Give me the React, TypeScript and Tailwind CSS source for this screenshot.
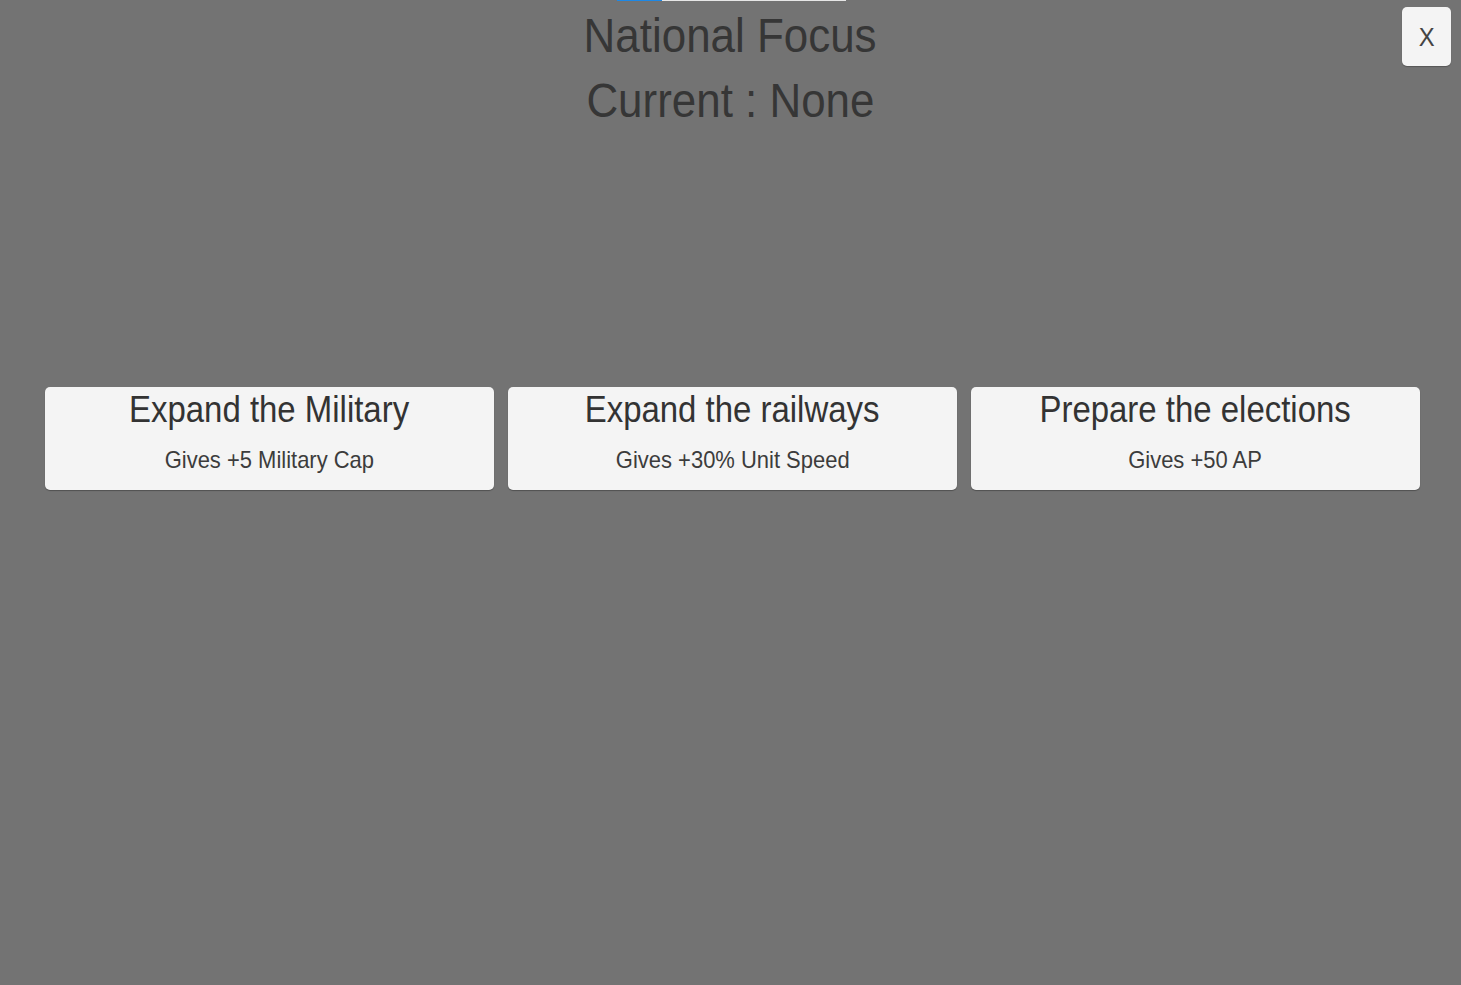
const focuses = [
  { title: 'Expand the Military', desc: 'Gives +5 Military Cap' },
  { title: 'Expand the railways', desc: 'Gives +30% Unit Speed' },
  { title: 'Prepare the elections', desc: 'Gives +50 AP' },
]

export default function App() {
  return (
    <div
      className="relative h-[985px] w-full overflow-hidden bg-[#737373] text-[#363636]"
      style={{ fontFamily: '"Liberation Sans", Arial, sans-serif' }}
    >
      <div className="absolute left-[617px] top-0 flex h-px w-[229px] bg-[#e6e6e6]">
        <div className="h-full w-[45px] bg-[#1e88e5]" />
      </div>

      <button className="absolute right-[10px] top-[7px] flex h-[59px] w-[49px] items-center justify-center rounded-[5px] bg-[#f4f4f4] text-[26px] leading-none text-[#444] shadow-[0_1px_1px_rgba(0,0,0,0.25)]">
        <span className="inline-block scale-x-[0.915]">X</span>
      </button>

      <div className="flex flex-col items-center pt-[3px]">
        <h1 className="inline-block scale-x-[0.915] text-[48px] leading-[65px]">National Focus</h1>
        <h2 className="inline-block scale-x-[0.915] text-[48px] leading-[65px]">Current : None</h2>
      </div>

      <div className="mt-[254px] grid grid-cols-3 gap-[14px] pl-[45px] pr-[41px]">
        {focuses.map((f) => (
          <button
            key={f.title}
            className="flex h-[103px] flex-col items-center rounded-[5px] bg-[#f4f4f4] shadow-[0_1px_1px_rgba(0,0,0,0.3)]"
          >
            <span className="mt-[5px] inline-block scale-x-[0.915] text-[36px] leading-[36px] text-[#333]">
              {f.title}
            </span>
            <span className="mt-[20px] inline-block scale-x-[0.915] text-[24px] leading-[24px] text-[#3c3c3c]">
              {f.desc}
            </span>
          </button>
        ))}
      </div>
    </div>
  )
}
